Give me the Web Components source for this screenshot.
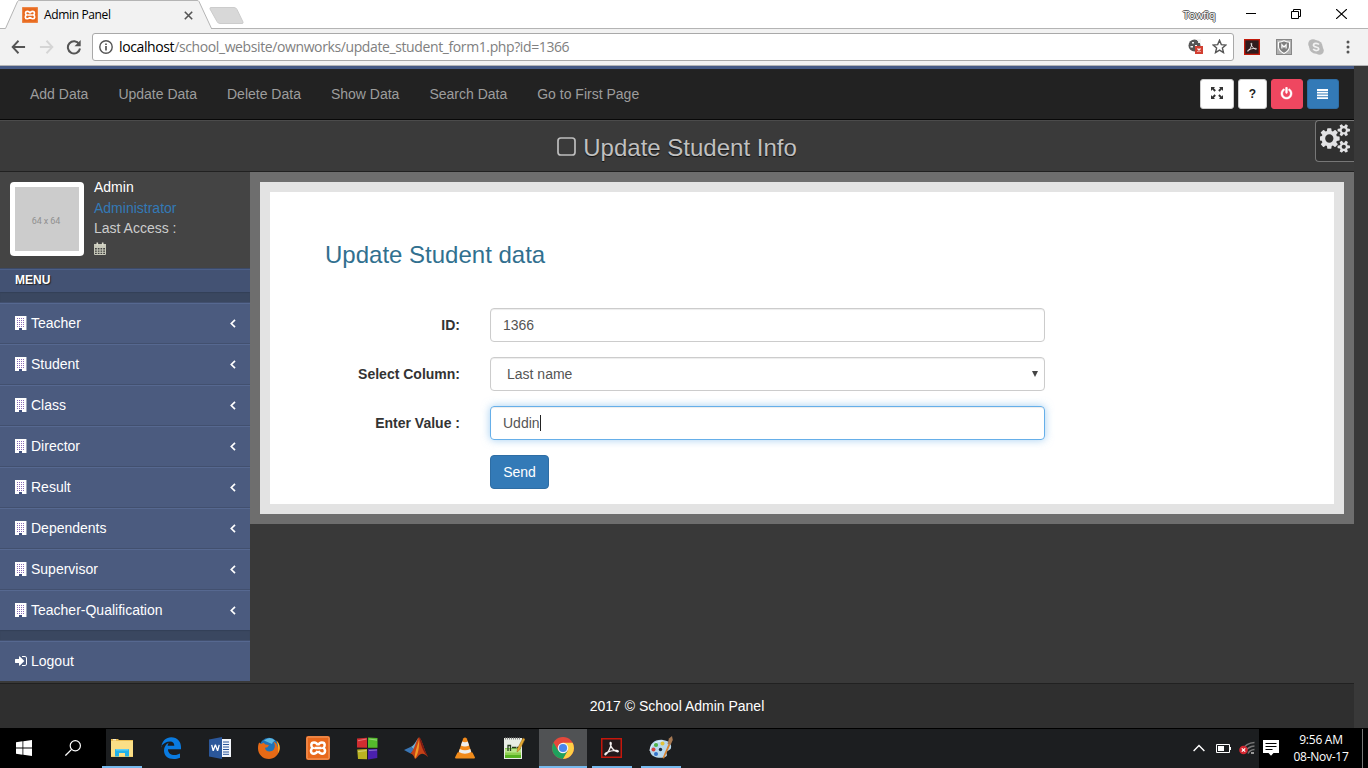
<!DOCTYPE html>
<html lang="en">
<head>
<meta charset="utf-8">
<title>Admin Panel</title>
<style>
html,body{margin:0;height:768px;overflow:hidden;background:#fff}
body{font:14px/20px "Liberation Sans",Arial,sans-serif;display:flex;flex-direction:column}
</style>
</head>
<body>
<browser-bar></browser-bar>
<admin-page></admin-page>
<task-bar></task-bar>
<script>
const define=(name,html)=>customElements.define(name,class extends HTMLElement{
  constructor(){super();this.attachShadow({mode:'open'}).innerHTML=html;}
});

const XAMPP=`<rect x="0" y="0" width="24" height="24" rx="2" fill="#e8681c"/><rect x="1" y="1" width="22" height="22" rx="1.5" fill="none" stroke="#f2a06a"/><path d="M11.700 9.200C10.500 5.600 5.600 5.800 5.300 8.800 5.200 10.300 5.700 11.300 6.800 12 5.400 12.700 4.800 14 5 15.400 5.500 18.600 10.500 18.400 11.600 14.900M12.300 9.200C13.500 5.600 18.400 5.800 18.700 8.800 18.800 10.300 18.300 11.300 17.200 12 18.600 12.700 19.200 14 19 15.400 18.500 18.600 13.500 18.400 12.400 14.900M8.500 12H15.500" fill="none" stroke="#fff" stroke-width="2.500"/>`;

const ACRO=`<path d="M6.300 18.300C8.200 16.800 11.400 11.500 11.700 7.300 11.700 5.300 10.200 5.800 10.700 7.700 11.600 11.200 14 14.300 17.500 15.400 19.300 15.700 19.200 14.200 17.400 14.100 13.500 13.900 9.500 15 6.600 16.500 4.900 17.400 5.200 18.900 6.300 18.300Z" fill="none" stroke="#f5f1f1" stroke-width="1.300"/>`;

const ICONS={
  power:['0 0 1792 1792','<path fill="currentColor" stroke="currentColor" stroke-width="60" d="M1664 896q0 156-61 298t-164 245-245 164-298 61-298-61-245-164-164-245-61-298q0-182 80.500-343t226.500-270q43-32 95.500-25t83.500 50q32 42 24.500 94.500t-49.500 84.500q-98 74-151.500 181t-53.500 228q0 104 40.500 198.500t109.500 163.500 163.500 109.500 198.500 40.500 198.500-40.500 163.500-109.500 109.500-163.500 40.500-198.500q0-121-53.500-228t-151.500-181q-42-32-49.500-84.500t24.500-94.500q31-43 84-50t95 25q146 109 226.500 270t80.500 343zm-640-768v640q0 52-38 90t-90 38-90-38-38-90v-640q0-52 38-90t90-38 90 38 38 90z"/>'],
  cogs:['0 0 1920 1792','<path fill="currentColor" d="M832 896q0-106-75-181t-181-75-181 75-75 181 75 181 181 75 181-75 75-181zm768 512q0-52-38-90t-90-38-90 38-38 90q0 53 37.500 90.500t90.500 37.500 90.500-37.500 37.500-90.500zm0-1024q0-52-38-90t-90-38-90 38-38 90q0 53 37.500 90.500t90.500 37.500 90.500-37.500 37.500-90.500zm-384 421v185q0 10-7 19.500t-16 10.500l-155 24q-11 35-32 76 34 48 90 115 7 11 7 20 0 12-7 19-23 30-82.500 89.500t-78.500 59.500q-11 0-21-7l-115-90q-37 19-77 31-11 108-23 155-7 24-30 24h-186q-11 0-20-7.500t-10-17.500l-23-153q-34-10-75-31l-118 89q-7 7-20 7-11 0-21-8-144-133-144-160 0-9 7-19 10-14 41-53t47-61q-23-44-35-82l-152-24q-10-1-17-9.500t-7-19.500v-185q0-10 7-19.500t16-10.500l155-24q11-35 32-76-34-48-90-115-7-11-7-20 0-12 7-20 22-30 82-89t79-59q11 0 21 7l115 90q34-18 77-32 11-108 23-154 7-24 30-24h186q11 0 20 7.500t10 17.500l23 153q34 10 75 31l118-89q8-7 20-7 11 0 21 8 144 133 144 160 0 8-7 19-12 16-42 54t-45 60q23 48 34 82l152 23q10 2 17 10.500t7 19.500zm640 533v140q0 16-149 31-12 27-30 52 51 113 51 138 0 4-4 7-122 71-124 71-8 0-46-47t-52-68q-20 2-30 2t-30-2q-14 21-52 68t-46 47q-2 0-124-71-4-3-4-7 0-25 51-138-18-25-30-52-149-15-149-31v-140q0-16 149-31 13-29 30-52-51-113-51-138 0-4 4-7 4-2 35-20t59-34 30-16q8 0 46 46.500t52 67.500q20-2 30-2t30 2q51-71 92-112l6-2q4 0 124 70 4 3 4 7 0 25-51 138 17 23 30 52 149 15 149 31zm0-1024v140q0 16-149 31-12 27-30 52 51 113 51 138 0 4-4 7-122 71-124 71-8 0-46-47t-52-68q-20 2-30 2t-30-2q-14 21-52 68t-46 47q-2 0-124-71-4-3-4-7 0-25 51-138-18-25-30-52-149-15-149-31v-140q0-16 149-31 13-29 30-52-51-113-51-138 0-4 4-7 4-2 35-20t59-34 30-16q8 0 46 46.500t52 67.500q20-2 30-2t30 2q51-71 92-112l6-2q4 0 124 70 4 3 4 7 0 25-51 138 17 23 30 52 149 15 149 31z"/>'],
  signin:['0 128 1536 1536','<path fill="currentColor" d="M1184 896q0 26-19 45l-544 544q-19 19-45 19t-45-19-19-45v-288h-448q-26 0-45-19t-19-45v-384q0-26 19-45t45-19h448v-288q0-26 19-45t45-19 45 19l544 544q19 19 19 45zm352-352v704q0 119-84.500 203.500t-203.500 84.500h-320q-13 0-22.500-9.500t-9.500-22.500q0-4-1-20t-.5-26.500 3-23.500 10-19.500 20.500-6.500h320q66 0 113-47t47-113v-704q0-66-47-113t-113-47h-312l-11.500-1-11.500-3-8-5.500-7-9-2-13.500q0-4-1-20t-.5-26.500 3-23.500 10-19.500 20.500-6.500h320q119 0 203.500 84.500t84.500 203.500z"/>'],
  expand:['0 0 12 12','<g fill="currentColor"><path d="M0 0h4L2.900 1.200 4.900 3.200 3.500 4.700 1.400 2.600 0 4z"/><path d="M12 0v4L10.700 2.600 8.600 4.700 7.200 3.200 9.200 1.200 8 0z"/><path d="M0 12V8L1.400 9.400 3.500 7.300 4.900 8.700 2.900 10.800 4 12z"/><path d="M12 12H8L9.200 10.800 7.200 8.700 8.600 7.300 10.700 9.400 12 8z"/></g>'],
  bars:['0 0 12 10','<path d="M0 1h12M0 3.700h12M0 6.400h12M0 9.100h12" stroke="currentColor" stroke-width="1.800"/>'],
  building:['0 0 12 14','<path fill="#fff" d="M0 0h11v14H0z"/><path d="M11 0h1v14h-1z" fill="#fff" opacity=".45"/><path d="M4 12h3v2H4z" fill="#3f4f80"/><path d="M2 2.500h8M2 4.500h8M2 6.500h8M2 8.500h8M2 10.500h8" stroke="#8a6bb8" stroke-width="1" stroke-dasharray="1 1"/>'],
  angle:['0 0 6 9','<path d="M5 .8 1.300 4.500 5 8.200" fill="none" stroke="#fff" stroke-width="1.700"/>'],
  calendar:['0 0 12 13','<path d="M.5 2.500h11v10H.5zM.5 5.500h11M.5 8h11M.5 10.300h11M3.300 5.500v7M6 5.500v7M8.700 5.500v7" fill="none" stroke="#c9cabb"/><path d="M0 2h12v3H0z" fill="#c9cabb"/><path d="M3.300.5v3M8.700.5v3" stroke="#dcdccd" stroke-width="1.600"/>'],
  square:['0 0 20 20','<rect x="1" y="1" width="17" height="17" rx="2.800" fill="none" stroke="#bdbdbd" stroke-width="1.700"/>'],
  back:['0 0 16 14','<path d="M8 .8 1.800 7 8 13.200M2 7h13" fill="none" stroke="#555" stroke-width="2"/>'],
  fwd:['0 0 16 14','<path d="M8 .8 14.200 7 8 13.200M14 7H1" fill="none" stroke="#d5d5d5" stroke-width="2"/>'],
  reload:['0 0 16 16','<path d="M13.200 5.200A6.100 6.100 0 1 0 14 9.500" fill="none" stroke="#555" stroke-width="2"/><path d="M14.700 1v6.200H8.500z" fill="#555"/>'],
  info:['0 0 14 14','<circle cx="7" cy="7" r="6.200" fill="none" stroke="#555" stroke-width="1.400"/><path d="M7 6v4.500M7 3.400v1.700" stroke="#555" stroke-width="1.700"/>'],
  x:['0 0 9 9','<path d="m.8.800 7.400 7.400M8.200.8.800 8.200" stroke="#555" stroke-width="1.600"/>'],
  star:['0 0 14 14','<path d="m7 1.200 1.700 4 4.300.4-3.300 2.800 1 4.300L7 10.400l-3.700 2.300 1-4.300L1 5.600l4.300-.4z" fill="none" stroke="#555" stroke-width="1.300"/>'],
  cookie:['0 0 16 15','<circle cx="6.500" cy="6.500" r="6" fill="#555"/><path d="M4 3h2v1.500H4zM2.500 7H5v1.500H2.500zM7 6h2v2H7zM9 0h4v4H9z" fill="#f3f3f3"/><circle cx="9" cy="3" r="1.200" fill="#555"/><path d="M7 7h8v8H7z" fill="#d23f31"/><path d="m9.500 9.500 3 3m0-3-3 3" stroke="#fff" stroke-width="1.200"/>'],
  acroS:['0 0 24 24','<path d="M0 0h24v24H0z" fill="#c21a0b"/><path d="M2 2h20v20H2z" fill="#301b1d"/>'+ACRO],
  shield:['0 0 16 16','<path d="M0 0h16v16H0z" fill="#888"/><path d="M1 1h14v14H1z" fill="#b0b0b0"/><path d="M2.500 3.200Q5.500 3 8 1.800 10.500 3 13.500 3.200V8Q13 12 8 14.500 3 12 2.500 8z" fill="#808080" stroke="#fff" stroke-width="1.100"/><path d="M5.900 9.500V5.700L8 8l2.100-2.300v3.800" fill="none" stroke="#fff" stroke-width="1.200"/>'],
  skype:['0 0 16 16','<circle cx="5" cy="5" r="4.800" fill="#b9b9b9"/><circle cx="8" cy="8" r="6.800" fill="#b9b9b9"/><circle cx="11.500" cy="11.500" r="4.300" fill="#b9b9b9"/><path d="M11 5.500C9.500 3.700 5.500 3.900 5.500 6.200c0 2.300 5.200 1.300 5.200 3.600 0 2.200-4 2.300-5.500.3" fill="none" stroke="#f2f2f2" stroke-width="1.700"/>'],
  dots:['0 0 4 14','<circle cx="2" cy="2" r="1.500" fill="#555"/><circle cx="2" cy="7" r="1.500" fill="#555"/><circle cx="2" cy="12" r="1.500" fill="#555"/>'],
  min:['0 0 10 10','<path d="M0 4.500h10" stroke="#000"/>'],
  max:['0 0 10 10','<path d="M.5 2.500h7v7h-7zM2.500 2.500v-2h7v7h-2" fill="none" stroke="#000"/>'],
  close:['0 0 10 10','<path d="m0 0 10 10M10 0 0 10" stroke="#000" stroke-width="1.100"/>'],
  xampp:['0 0 24 24',XAMPP],
  win:['0 0 16 16','<path d="M0 2.300 6.500 1.300V7.500H0zM7.300 1.200 16 0v7.500H7.300zM0 8.400h6.500v6.300L0 13.800zM7.300 8.400H16V16l-8.700-1.200z" fill="#fff"/>'],
  search:['0 0 16 16','<circle cx="10.300" cy="5.700" r="5.100" fill="none" stroke="#fff" stroke-width="1.200"/><path d="M6.600 9.400.4 15.600" stroke="#fff" stroke-width="1.300"/>'],
  folder:['0 0 24 24','<path d="M1 3h7l1 1h14v17H1z" fill="#e9bd52"/><path d="M1 5h22v15.500H1z" fill="#fbdf86"/><path d="M3 3.800h3" stroke="#fff"/><path d="M5 20.500V14q0-1 1-1h12q1 0 1 1v6.500h-4v-3.500H9v3.500z" fill="#21b2ea"/><path d="M6 13h12v1.500H6z" fill="#5fd0f5"/>'],
  edge:['0 0 20 22','<path d="M.2 10.300C1 3.700 5.200.2 10.200.2 16.500.2 20 4.800 20 10v2.300H7c0 4 3 5.800 6.400 5.800 2.400 0 4.200-.6 5.600-1.500v4.100c-2 .9-4 1.300-6.300 1.300-6 0-9.700-3.400-9.700-8.500 0-3.300 1.800-6.200 4.700-7.700-.6.800-1 1.900-1.100 3h6.700c0-2.600-1.300-4.200-4.200-4.200-3.900 0-7.200 2-9.900 5.700z" fill="#0a7be0"/>'],
  word:['0 0 22 22','<path d="M12 2h10v18H12z" fill="#f3f6fb"/><path d="M14 5h6M14 7.500h6M14 10h6M14 12.500h6M14 15h6M14 17.300h6" stroke="#2b579a"/><path d="M0 2.500 13 0v22L0 19.500z" fill="#2b579a"/><path d="m2.700 7.800 1.500 6 2.200-6 2.200 6 1.600-6" fill="none" stroke="#fff" stroke-width="1.300" stroke-linejoin="bevel"/>'],
  firefox:['0 0 22 22','<circle cx="11" cy="10.600" r="9.800" fill="#1e73b8"/><path d="M6 3.500Q12-1.500 17 3.500 14 5 14 7z" fill="#5cb7e0"/><path d="M1.200 5.500 3 7 5.500 5.800 7.500 7.500 11 8 9.500 10.200 7 10.800C7 14.800 13 15.800 15.800 12.500 17.500 10 17 7 15.500 4.800 19 6 20 9.500 19.600 11 20.500 9 20 6 18.300 3.500 21.500 6 22 9.500 21.800 12 21 18 16 22 11 22 4.500 22 0 17 0 11.500 0 9 .3 7 1.200 5.500z" fill="#e66a16"/><path d="M18.300 3.500C22 7 22.500 12 20 16 21 11 20 7 18.300 3.500z" fill="#fdc52c"/>'],
  cubes:['0 0 22 22','<path d="M1 1.500 11 .6v9.700L1 10z" fill="#d02d30"/><path d="M12 .5 21.500 1v9.300H12z" fill="#55ba2c"/><path d="M1.200 12 11 11.500v9.800L2 21z" fill="#b9b222"/><path d="M12 11.500h9.300V20L12 21.500z" fill="#4b20ad"/><path d="M2 3.500 10.500 2M13 2l8 1M2 14l8.500-1M13 13l8-.6" stroke="#fff" opacity=".35"/>'],
  matlab:['0 0 24 22','<path d="M0 13 7 9.700 10.500 13 6.500 16.500z" fill="#3a76b5"/><path d="M7 9.700C10 9 13 2.500 14.500.5L10.500 13z" fill="#6bb0d8"/><path d="M6.500 16.500C10 14 12 3 15 .3 18 2 20 13 24 20 20.500 17 18.500 16 16 17.500 14 18.500 13 21.500 11 22 10 19 9 17.500 6.500 16.500z" fill="#c64216"/><path d="M15 .3C18 2 20 13 24 20 18 14 17 7 15 .3z" fill="#7a1915"/><path d="M15 3C15.500 10 14 18 11 21.500 10 18 13 10 15 3z" fill="#f29a27"/>'],
  vlc:['0 0 22 22','<path d="M3.500 15.500h15L21 20.500q0 1-1 1H2q-1 0-1-1z" fill="#f18c1a"/><path d="M9.200 1.500Q11-.5 12.800 1.500L18 17Q11 21 4 17z" fill="#f28a1c"/><path d="m8.200 4.500-1.300 4q4 2 8.200 0l-1.300-4q-2.800 1.300-5.600 0zM5.800 12l-1 3q6 3.600 12.400 0l-1-3q-5.200 2.700-10.400 0z" fill="#eee"/>'],
  npp:['0 0 22 24','<path d="M1 2h18v21H1z" fill="#e9eee6"/><path d="M2 12h16v10H2z" fill="#57b321"/><path d="M2 16h16v3H2z" fill="#8ed050"/><path d="M2 12.500h16v4H2z" fill="#b9e58a"/><path d="M2 2.500h16" stroke="#888" stroke-width="2" stroke-dasharray="1 1"/><path d="M5 15V9.500h2.500V15M9 11.500h4M13.500 11.500H17" fill="none" stroke="#253c1c" stroke-width="1.300"/><path d="m14 16 .5-3.500L20 2l2 1.200L16.500 14z" fill="#e5ab32" stroke="#96651a" stroke-width=".5"/>'],
  chrome:['0 0 22 22','<circle cx="11" cy="11" r="11" fill="#e4483b"/><path d="M1.500 5.500A11 11 0 0 0 11 22l4.800-8.300H6.200z" fill="#1fa15d"/><path d="M20.600 5.700H11l4.800 8L11 22A11 11 0 0 0 20.600 5.700z" fill="#fecf45"/><circle cx="11" cy="11" r="5.300" fill="#f4f4f4"/><circle cx="11" cy="11" r="4.100" fill="#4a86ed"/>'],
  acro:['0 0 24 24','<path d="M1 2h21v20H1z" fill="#c5170c"/><path d="M2.500 3.500h18v17h-18z" fill="#231a1c"/><g transform="translate(-.5 .3)">'+ACRO+'</g>'],
  paint:['0 0 24 24','<path d="M1 15C0 8 6 3 14 4c6 .7 9 4 8 8-1 3-4 2-4.500 4-.4 2 1.500 3-.5 4.500-3 2-15 2.500-16-5.500z" fill="#b6d7ed"/><path d="M1 15C1 10 6 5 14 5" fill="none" stroke="#e3f1fa"/><circle cx="7" cy="9" r="2.100" fill="#4fb348"/><circle cx="13.500" cy="7.500" r="2" fill="#e2c33a"/><circle cx="4.500" cy="13.500" r="2" fill="#d7433d"/><circle cx="7" cy="18" r="2" fill="#3473c9"/><circle cx="11.500" cy="13.500" r="1.700" fill="#1d2a3c"/><path d="m13.500 22 6-14 1.800.8L15 22.500z" fill="#d98432"/><path d="M18.500 8 20 2.500 23 0l.8 4-2.300 5z" fill="#a67953"/>'],
  up:['0 0 12 8','<path d="m.6 7 5.400-5.400L11.400 7" fill="none" stroke="#fff" stroke-width="1.400"/>'],
  battery:['0 0 15 9','<path d="M.5.500h13v8H.5zM14.500 3v3" fill="none" stroke="#fff"/><path d="M2 2h6v5H2z" fill="#fff"/>'],
  wifi:['0 0 16 14','<path d="M3 9Q7 2 15.500 1.500M6 11Q9 5.500 15.500 5M9 12.500Q11 9 15.500 8.600" fill="none" stroke="#777" stroke-width="1.500"/><path d="M12 11h3v2h-3z" fill="#999"/><circle cx="4.500" cy="9" r="4.300" fill="#d42731"/><path d="m2.800 7.300 3.400 3.400m0-3.400-3.400 3.400" stroke="#fff" stroke-width="1.200"/>'],
  note:['0 0 16 16','<path d="M0 0h16v13h-5.500L8 15.700 5.500 13H0z" fill="#fff"/><path d="M2.500 3.500h11M2.500 6.500h11M2.500 9.500h7" stroke="#000"/>']
};

customElements.define('app-icon',class extends HTMLElement{
  constructor(){super();this.attachShadow({mode:'open'});}
  connectedCallback(){
    const [box,body]=ICONS[this.getAttribute('name')];
    const w=this.getAttribute('w'),h=this.getAttribute('h')||w;
    this.shadowRoot.innerHTML=`<style>:host{display:block;flex:none;width:${w}px;height:${h}px}svg{display:block}</style><svg width="${w}" height="${h}" viewBox="${box}" preserveAspectRatio="none">${body}</svg>`;
  }
});

define('browser-bar',`<style>
:host{display:block;height:66px;flex:none;font:12px/16px "Open Sans","Noto Sans",sans-serif;color:#000}
.strip{height:29px;display:flex;position:relative;background:#fff}
.strip>svg{position:absolute;left:0;top:0}
.tab{position:relative;width:210px;box-sizing:border-box;padding:7px 0 0 22px;display:flex;align-items:flex-start}
.tab span{margin:0 0 0 6px;width:140px;letter-spacing:-.36px}
.tab app-icon:last-child{margin-top:4px}
.win{margin-left:auto;display:flex;align-items:flex-start;padding:9px 21px 0 0}
.win span{font-size:11px;line-height:11px;letter-spacing:-.4px;color:#fff;text-shadow:1px 0 0 #555,-1px 0 0 #555,0 1px 0 #555,0 -1px 0 #555;width:63px}
.win app-icon{margin-right:35px}.win app-icon:last-child{margin-right:0}
.tools{height:36px;background:#f2f2f2;display:flex;align-items:center;padding-left:11px;border-bottom:1px solid #b3b4b6}
.addr{margin-left:9px;width:1142px;height:28px;box-sizing:border-box;border:1px solid #a9a9a9;border-radius:3px;background:#fff;display:flex;align-items:center;padding:0 6px;font-size:14px;margin-top:-1px}
.addr p{margin:0 auto 0 6px;color:#808080;letter-spacing:-.39px;white-space:nowrap}.addr b{font-weight:400;color:#000}
.line{position:absolute;left:211px;right:0;bottom:0;height:1px;background:#b4b4b4}
</style>
<div class="strip">
<svg width="260" height="29"><path d="M0 28.500H5.500L17.500 1.500Q18 .5 19.500.5H197Q198.500.5 199 1.500L211.500 28.500H260V29H0Z" fill="#f2f2f2"/><path d="M0 28.500H5.500L17.500 1.500Q18 .5 19.500.5H197Q198.500.5 199 1.500L211.500 28.500" fill="none" stroke="#b4b4b4"/><path d="M211 7.500h23q2 0 3 2l6 12.500q.5 1.500-1 1.500h-22q-2 0-3-2l-7-12.500q-.500-1.500 1-1.500z" fill="#d8d8d8" stroke="#ccc"/></svg>
<div class="line"></div>
<div class="tab"><app-icon name="xampp" w="16"></app-icon><span>Admin Panel</span><app-icon name="x" w="9"></app-icon></div>
<div class="win"><span>Towfiq</span><app-icon name="min" w="10"></app-icon><app-icon name="max" w="10"></app-icon><app-icon name="close" w="11" h="10"></app-icon></div>
</div>
<div class="tools"><app-icon name="back" w="15" h="14"></app-icon><app-icon name="fwd" w="15" h="14" style="margin-left:13px"></app-icon><app-icon name="reload" w="16" style="margin-left:12px;margin-right:1px"></app-icon>
<div class="addr"><app-icon name="info" w="14"></app-icon><p><b>localhost</b>/school_website/ownworks/update_student_form1.php?id=1366</p><app-icon name="cookie" w="16" h="15" style="margin-right:8px"></app-icon><app-icon name="star" w="15"></app-icon></div>
<app-icon name="acroS" w="16" style="margin-left:10px"></app-icon><app-icon name="shield" w="16" style="margin-left:16px"></app-icon><app-icon name="skype" w="16" style="margin-left:16px"></app-icon><app-icon name="dots" w="4" h="14" style="margin-left:22px"></app-icon></div>`);

define('nav-bar',`<style>
:host{height:50px;background:#222;border-top:3px solid #465a85;border-bottom:1px solid #080808;display:flex;align-items:center;padding:0 15px 0 30px;color:#9d9d9d;gap:30px}
.b{display:flex;gap:4px;margin-left:auto}
i{box-sizing:border-box;height:30px;border-radius:3px;display:flex;align-items:center;justify-content:center;font:bold 12px "Liberation Sans",sans-serif;color:#333;background:#fff;border:1px solid #ccc}
</style><span>Add Data</span><span>Update Data</span><span>Delete Data</span><span>Show Data</span><span>Search Data</span><span>Go to First Page</span>
<div class="b"><i style="width:34px;padding:0 1px 2px 0"><app-icon name="expand" w="12"></app-icon></i><i style="width:29px;color:#222">?</i><i style="width:32px;background:#ef4760;border-color:#ef4760;color:#fff;padding:0 1px 2px 0"><app-icon name="power" w="13"></app-icon></i><i style="width:32px;background:#337ab7;border-color:#2e6da4;color:#fff;padding:0 1px 1px 0"><app-icon name="bars" w="11" h="10"></app-icon></i></div>`);

define('title-bar',`<style>
:host{height:50px;background:#3a3a3a;border-top:1px solid #4b4b4b;border-bottom:1px solid #212121;display:flex;position:relative;justify-content:center;align-items:center;font-size:24px;line-height:28px;color:#c0c0c0;text-shadow:0 1px 1px #111}
app-icon{margin-right:6px;margin-top:-1px}
.gear{position:absolute;right:0;top:-1px;border:1px solid #777;border-right:0;border-radius:4px 0 0 4px;background:#303030;color:#e2e2e4;display:flex;align-items:flex-start;padding:3px 0 0 4px;box-sizing:content-box;width:34px;height:37px}
.gear app-icon{margin:0}
.t{display:flex;align-items:center;padding-top:3px}
</style><div class="t"><app-icon name="square" w="20"></app-icon><span>Update Student Info</span></div><div class="gear"><app-icon name="cogs" w="31" h="29"></app-icon></div>`);

define('user-card',`<style>
:host{display:flex;height:96px;background:#444;box-sizing:border-box;padding:10px;gap:10px;color:#ccc}
.ph{width:64px;height:64px;border:5px solid #fff;border-radius:4px;background:#ccc;color:#909090;font:9px/68px "Roboto",sans-serif;letter-spacing:-.1px;text-indent:-2px;text-align:center;flex:none}
.n{line-height:20.500px;margin-top:-5px}b{font-weight:400;color:#fff;display:block}a{color:#337ab7;display:block}
app-icon{margin-top:3px}
</style><div class="ph">64 x 64</div><div class="n"><b>Admin</b><a>Administrator</a>Last Access :<app-icon name="calendar" w="12" h="13"></app-icon></div>`);

customElements.define('menu-item',class extends HTMLElement{
  constructor(){super();this.attachShadow({mode:'open'});}
  connectedCallback(){
    const out=this.hasAttribute('out');
    this.shadowRoot.innerHTML=`<style>:host{display:flex;box-sizing:border-box;height:41px;background:#4b5b7f;border-top:1px solid #42506f;box-shadow:inset 0 1px #566890;color:#fff;align-items:center;padding:0 14px 0 15px}span{margin:0 auto 0 4px}</style>
    <app-icon name="${out?'signin':'building'}" w="12" h="${out?12:14}"></app-icon><span><slot></slot></span>${out?'':'<app-icon name="angle" w="6" h="9"></app-icon>'}`;
  }
});

define('side-menu',`<style>
:host{display:block;width:250px;flex:none}
.h{box-sizing:border-box;height:24px;background:#435273;border-top:1px solid #3c4a68;box-shadow:inset 0 1px #4c5f88;color:#fff;font:bold 12px/22px "Liberation Sans",sans-serif;padding-left:15px;text-shadow:1px 1px 1px #222}
.g{height:10px;background:#3a4760;box-shadow:inset 0 1px 1px #344058}
</style><user-card></user-card><div class="h">MENU</div><div class="g"></div>
<menu-item>Teacher</menu-item><menu-item>Student</menu-item><menu-item>Class</menu-item><menu-item>Director</menu-item><menu-item>Result</menu-item><menu-item>Dependents</menu-item><menu-item>Supervisor</menu-item><menu-item>Teacher-Qualification</menu-item><div class="g"></div><menu-item out>Logout</menu-item>`);

define('form-row',`<style>
:host{display:flex;margin-bottom:15px;height:34px;align-items:center}
label{width:135px;text-align:right;font-weight:bold;color:#333;margin-right:30px}
div{box-sizing:border-box;width:555px;height:34px;border:1px solid #ccc;border-radius:4px;padding:0 12px;color:#555;display:flex;align-items:center;box-shadow:inset 0 1px 1px rgba(0,0,0,.075)}
:host([focus]) div{border-color:#66afe9;box-shadow:inset 0 1px 1px rgba(0,0,0,.075),0 0 8px rgba(102,175,233,.6)}
:host([focus]) div::after{content:"";width:1px;height:16px;background:#222}
:host([pick]) div{padding:0 6px 0 16px}
:host([pick]) div::after{content:"";margin-left:auto;border:3.500px solid transparent;border-top:6px solid #444;border-bottom:0}
</style><label><slot name="label"></slot></label><div><slot></slot></div>`);

define('update-form',`<style>
:host{display:block;box-sizing:border-box;height:352px;flex:1;border:10px solid #6e6e6e}
section{box-sizing:border-box;height:332px;border:10px solid #e3e3e3;background:#fff;padding:49px 55px 0}
h3{margin:0 0 39px;font:24px/28px "Liberation Sans",sans-serif;color:#31708f}
button{display:block;margin:0 0 0 165px;height:34px;width:59px;border:1px solid #2e6da4;border-radius:4px;background:#337ab7;color:#fff;font:14px/20px "Liberation Sans",sans-serif;padding:0}
</style><section><h3>Update Student data</h3>
<form-row><span slot="label">ID:</span>1366</form-row>
<form-row pick><span slot="label">Select Column:</span>Last name</form-row>
<form-row focus><span slot="label">Enter Value :</span>Uddin</form-row>
<button>Send</button></section>`);

define('admin-page',`<style>
:host{display:flex;height:662px;flex:none;background:#393939}
.page{width:1354px;display:flex;flex-direction:column;background:#393939}
main{display:flex;align-items:flex-start;height:511px}
footer{height:44px;border-top:1px solid #212121;background:#2f2f2f;color:#fff;text-align:center;line-height:44px}
</style><div class="page"><nav-bar></nav-bar><title-bar></title-bar><main><side-menu></side-menu><update-form></update-form></main><footer>2017 © School Admin Panel</footer></div>`);

define('task-bar',`<style>
:host{display:flex;height:40px;background:linear-gradient(90deg,#000 106px,#1c1e20 106px,#1c1e20 1259px,#000 1259px);position:relative;font:12px/17px "Open Sans","Noto Sans",sans-serif;color:#fff;gap:1px}
:host::before{content:"";position:absolute;left:0;right:0;top:0;height:1px;background:#000}
i{width:48px;height:40px;box-sizing:border-box;display:flex;align-items:center;justify-content:center;flex:none}
.u{background:linear-gradient(#76b9ed,#76b9ed) center bottom/40px 2px no-repeat}
.a{background:linear-gradient(#76b9ed,#76b9ed) bottom/48px 2px no-repeat #505254}
.tray{margin-left:auto;display:flex;align-items:center;padding-right:6px}
.clock{text-align:center;width:68px;letter-spacing:-.25px;margin-left:8px;margin-top:-1px}
.edge{width:1px;background:#777;margin-right:5px}
</style>
<i><app-icon name="win" w="16"></app-icon></i><i><app-icon name="search" w="16"></app-icon></i><i class="u"><app-icon name="folder" w="24"></app-icon></i><i><app-icon name="edge" w="20" h="22"></app-icon></i><i><app-icon name="word" w="22"></app-icon></i><i><app-icon name="firefox" w="22"></app-icon></i><i><app-icon name="xampp" w="24"></app-icon></i><i><app-icon name="cubes" w="22" h="23"></app-icon></i><i><app-icon name="matlab" w="24" h="22"></app-icon></i><i><app-icon name="vlc" w="22"></app-icon></i><i><app-icon name="npp" w="22" h="24"></app-icon></i><i class="a"><app-icon name="chrome" w="22"></app-icon></i><i class="u"><app-icon name="acro" w="24"></app-icon></i><i class="u"><app-icon name="paint" w="24"></app-icon></i>
<div class="tray"><app-icon name="up" w="12" h="8"></app-icon><app-icon name="battery" w="15" h="9" style="margin-left:11px"></app-icon><app-icon name="wifi" w="16" h="14" style="margin-left:8px"></app-icon><app-icon name="note" w="16" style="margin-left:8px"></app-icon><div class="clock">9:56 AM<br>08-Nov-17</div></div><div class="edge"></div>`);
</script>
</body>
</html>
